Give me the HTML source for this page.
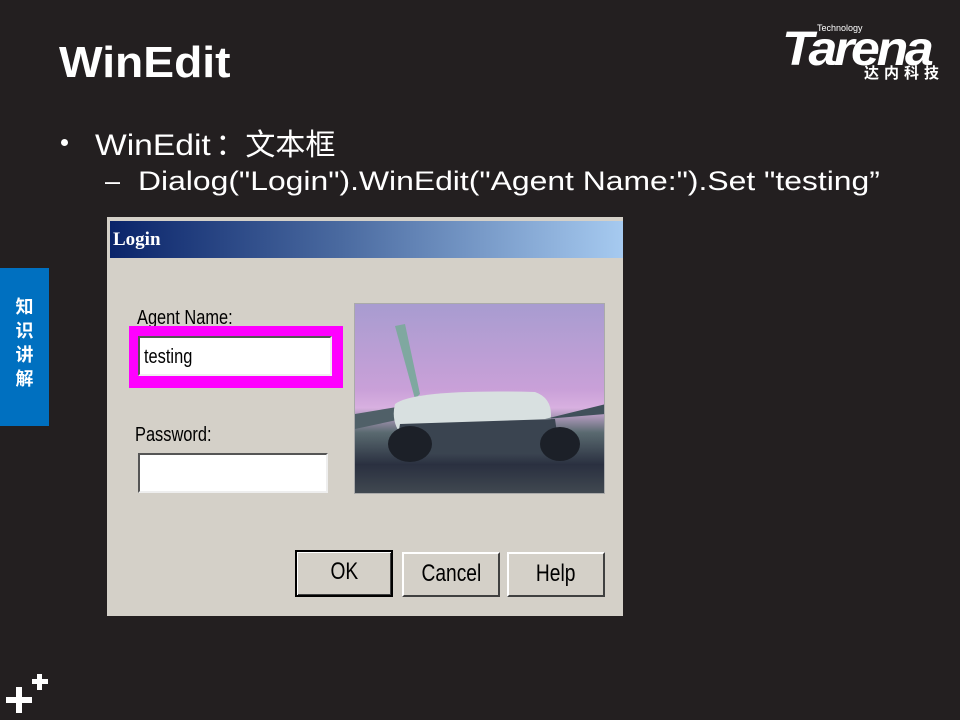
<!DOCTYPE html>
<html><head><meta charset="utf-8"><style>
*{margin:0;padding:0;box-sizing:border-box}
body{width:960px;height:720px;background:#231f20;position:relative;overflow:hidden;font-family:"Liberation Sans","Noto Sans CJK SC",sans-serif;color:#fff}
.abs{position:absolute}
.title{left:59px;top:38px;font-size:44px;font-weight:bold;transform:scaleX(1.05);transform-origin:left}
.tab{left:0;top:268px;width:49px;height:158px;background:#0070c0;font-family:"Noto Sans CJK SC",sans-serif;font-weight:bold;font-size:18px;line-height:24px;text-align:center;padding-top:26px}
.dlg{left:107px;top:217px;width:516px;height:399px;background:#d4d0c8}
.tb{left:3px;top:4px;width:513px;height:37px;background:linear-gradient(90deg,#0a246a,#4a6aa0 45%,#a6caf0)}
.tb span{position:absolute;left:3px;top:8px;font-family:"Liberation Serif",serif;font-weight:bold;font-size:19px;color:#fff}
.lbl{font-family:"Liberation Sans",sans-serif;font-size:20px;color:#000;transform:scaleX(.82);transform-origin:left;white-space:nowrap}
.edit{background:#fff;border-top:2px solid #555;border-left:2px solid #555;border-right:2px solid #eee;border-bottom:2px solid #eee}
.btn{background:#d4d0c8;border:2px solid;border-color:#fff #404040 #404040 #fff;color:#000;text-align:center;line-height:40px}
.btn span{display:inline-block;font-size:24px;transform:scaleX(.8)}
</style></head><body>
<div class="abs title">WinEdit</div>
<div class="abs" style="left:61px;top:139px;width:7px;height:7px;border-radius:50%;background:#fff"></div>
<div class="abs" style="left:95px;top:120px;font-size:30px;white-space:nowrap"><span style="display:inline-block;transform:scaleX(1.12);transform-origin:left">WinEdit</span><span style="margin-left:17px">：文本框</span></div>
<div class="abs" style="left:105px;top:166px;font-size:27px;white-space:nowrap">–</div>
<div class="abs" style="left:138px;top:166px;font-size:27px;white-space:nowrap;transform:scaleX(1.18);transform-origin:left">Dialog("Login").WinEdit("Agent Name:").Set "testing”</div>
<div class="abs" style="left:782px;top:20px;width:170px;height:64px">
<div class="abs" style="left:35px;top:3px;font-size:9px">Technology</div>
<div class="abs" style="left:0;top:2px;font-size:48px;font-weight:bold;font-style:italic;letter-spacing:-3px;transform:scaleX(1.08);transform-origin:left">Tarena</div>
<div class="abs" style="left:82px;top:42px;font-size:15px;font-weight:bold;letter-spacing:5px;font-family:'Noto Sans CJK SC',sans-serif">达内科技</div>
</div>
<div class="abs tab">知<br>识<br>讲<br>解</div>
<div class="abs dlg">
<div class="abs tb"><span>Login</span></div>
<div class="abs lbl" style="left:30px;top:90px">Agent Name:</div>
<div class="abs" style="left:22px;top:109px;width:214px;height:62px;background:#f0f"></div>
<div class="abs edit" style="left:31px;top:119px;width:194px;height:40px"><span class="lbl abs" style="left:4px;top:8px">testing</span></div>
<div class="abs lbl" style="left:28px;top:207px">Password:</div>
<div class="abs edit" style="left:31px;top:236px;width:190px;height:40px"></div>
<div class="abs" style="left:247px;top:86px;width:251px;height:191px;border:1px solid #aaa;background:linear-gradient(180deg,#a89cd0 0%,#c9a0d8 45%,#d8b0e0 55%,#5a6a70 68%,#2a3040 85%,#404850 100%);overflow:hidden">
<svg width="251" height="191" viewBox="0 0 251 191"><path d="M40 22 L50 20 L65 90 L60 95 Z" fill="#7fa8a0"/><path d="M0 110 L60 100 L70 110 L0 125Z" fill="#506068"/><path d="M40 100 Q60 85 180 88 Q200 95 195 120 L50 135 Q35 120 40 100Z" fill="#d8e0e0"/><path d="M45 120 L200 115 L205 150 L40 150Z" fill="#3a4450"/><ellipse cx="55" cy="140" rx="22" ry="18" fill="#1c2028"/><ellipse cx="205" cy="140" rx="20" ry="17" fill="#1c2028"/><path d="M190 115 L251 100 L251 110Z" fill="#40505a"/></svg>
</div>
<div class="abs btn" style="left:188px;top:333px;width:98px;height:47px;border:2px solid #000;box-shadow:inset 1px 1px #fff,inset -1px -1px #404040"><span>OK</span></div>
<div class="abs btn" style="left:295px;top:335px;width:98px;height:45px"><span>Cancel</span></div>
<div class="abs btn" style="left:400px;top:335px;width:98px;height:45px"><span>Help</span></div>
</div>
<svg class="abs" style="left:6px;top:671px" width="44" height="44"><path d="M0 26h26v6H0zM10 16h6v26h-6zM26 8h16v5H26zM31 3h5v16h-5z" fill="#fff"/></svg>
</body></html>
